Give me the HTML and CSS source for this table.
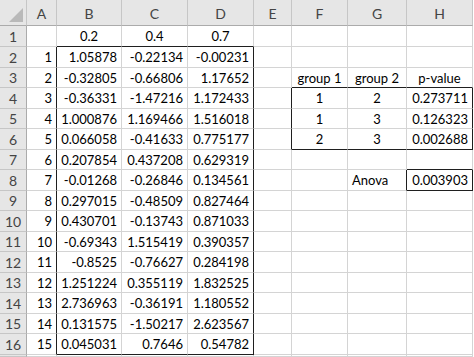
FILE: index.html
```html
<!DOCTYPE html>
<html>
<head>
<meta charset="utf-8">
<link rel="stylesheet" href="styles.css">
</head>
<body>
<div class="sheet">
  <div class="h corner"><span class="tri"></span></div>
  <div class="h">A</div><div class="h">B</div><div class="h">C</div><div class="h">D</div><div class="h">E</div><div class="h">F</div><div class="h">G</div><div class="h">H</div>

  <div class="r">1</div><div class="c"></div><div class="c m bb">0.2</div><div class="c m bb">0.4</div><div class="c m bb">0.7</div><div class="c"></div><div class="c"></div><div class="c"></div><div class="c"></div>
  <div class="r">2</div><div class="c n br">1</div><div class="c n">1.05878</div><div class="c n">-0.22134</div><div class="c n br">-0.00231</div><div class="c"></div><div class="c"></div><div class="c"></div><div class="c"></div>
  <div class="r">3</div><div class="c n br">2</div><div class="c n">-0.32805</div><div class="c n">-0.66806</div><div class="c n br">1.17652</div><div class="c"></div><div class="c m bb">group 1</div><div class="c m bb">group 2</div><div class="c m bb">p-value</div>
  <div class="r">4</div><div class="c n br">3</div><div class="c n">-0.36331</div><div class="c n">-1.47216</div><div class="c n br">1.172433</div><div class="c br"></div><div class="c m">1</div><div class="c m">2</div><div class="c n br">0.273711</div>
  <div class="r">5</div><div class="c n br">4</div><div class="c n">1.000876</div><div class="c n">1.169466</div><div class="c n br">1.516018</div><div class="c br"></div><div class="c m">1</div><div class="c m">3</div><div class="c n br">0.126323</div>
  <div class="r">6</div><div class="c n br">5</div><div class="c n">0.066058</div><div class="c n">-0.41633</div><div class="c n br">0.775177</div><div class="c br"></div><div class="c m bb">2</div><div class="c m bb">3</div><div class="c n br bb">0.002688</div>
  <div class="r">7</div><div class="c n br">6</div><div class="c n">0.207854</div><div class="c n">0.437208</div><div class="c n br">0.629319</div><div class="c"></div><div class="c"></div><div class="c"></div><div class="c bb"></div>
  <div class="r">8</div><div class="c n br">7</div><div class="c n">-0.01268</div><div class="c n">-0.26846</div><div class="c n br">0.134561</div><div class="c"></div><div class="c"></div><div class="c l br">Anova</div><div class="c n br bb">0.003903</div>
  <div class="r">9</div><div class="c n br">8</div><div class="c n">0.297015</div><div class="c n">-0.48509</div><div class="c n br">0.827464</div><div class="c"></div><div class="c"></div><div class="c"></div><div class="c"></div>
  <div class="r">10</div><div class="c n br">9</div><div class="c n">0.430701</div><div class="c n">-0.13743</div><div class="c n br">0.871033</div><div class="c"></div><div class="c"></div><div class="c"></div><div class="c"></div>
  <div class="r">11</div><div class="c n br">10</div><div class="c n">-0.69343</div><div class="c n">1.515419</div><div class="c n br">0.390357</div><div class="c"></div><div class="c"></div><div class="c"></div><div class="c"></div>
  <div class="r">12</div><div class="c n br">11</div><div class="c n">-0.8525</div><div class="c n">-0.76627</div><div class="c n br">0.284198</div><div class="c"></div><div class="c"></div><div class="c"></div><div class="c"></div>
  <div class="r">13</div><div class="c n br">12</div><div class="c n">1.251224</div><div class="c n">0.355119</div><div class="c n br">1.832525</div><div class="c"></div><div class="c"></div><div class="c"></div><div class="c"></div>
  <div class="r">14</div><div class="c n br">13</div><div class="c n">2.736963</div><div class="c n">-0.36191</div><div class="c n br">1.180552</div><div class="c"></div><div class="c"></div><div class="c"></div><div class="c"></div>
  <div class="r">15</div><div class="c n br">14</div><div class="c n">0.131575</div><div class="c n">-1.50217</div><div class="c n br">2.623567</div><div class="c"></div><div class="c"></div><div class="c"></div><div class="c"></div>
  <div class="r">16</div><div class="c n br">15</div><div class="c n bb">0.045031</div><div class="c n bb">0.7646</div><div class="c n br bb">0.54782</div><div class="c"></div><div class="c"></div><div class="c"></div><div class="c"></div>
  <div class="r"></div><div class="c"></div><div class="c"></div><div class="c"></div><div class="c"></div><div class="c"></div><div class="c"></div><div class="c"></div><div class="c"></div>
</div>
</body>
</html>
```
FILE: styles.css
```css
html, body {
  margin: 0;
  padding: 0;
  background: #ffffff;
  overflow: hidden;
}

.sheet {
  display: grid;
  height: 357px;
  overflow: hidden;
  grid-template-columns: 27px 30px 65px 66px 66px 38px 56px 59px 66px;
  grid-template-rows: 26px 21.4px repeat(15, 20.5px) 1fr;
  font-family: "Lato", "Open Sans", sans-serif;
  font-size: 13px;
  color: #000;
}

.sheet > div {
  box-sizing: border-box;
  display: flex;
  align-items: center;
  white-space: nowrap;
  overflow: hidden;
  min-height: 0;
}

.h {
  background: #e6e6e6;
  color: #444;
  justify-content: center;
  border-right: 1px solid #c6c6c6;
  border-bottom: 1px solid #ababab;
  font-size: 14px;
  padding-top: 2px;
}

.corner {
  position: relative;
}

.tri {
  position: absolute;
  right: 3px;
  bottom: 3px;
  width: 0;
  height: 0;
  border-left: 14px solid transparent;
  border-bottom: 14px solid #b9b9b9;
}

.r {
  background: #e6e6e6;
  color: #444;
  justify-content: center;
  border-right: 1px solid #ababab;
  border-bottom: 1px solid #c6c6c6;
  font-size: 14px;
}

.c {
  border-right: 1px solid #d4d4d4;
  border-bottom: 1px solid #d4d4d4;
  padding: 0 4px;
}

.n { justify-content: flex-end; }
.m { justify-content: center; }
.l { justify-content: flex-start; }

.bb { border-bottom-color: #1f1f1f; }
.br { border-right-color: #1f1f1f; }
```
